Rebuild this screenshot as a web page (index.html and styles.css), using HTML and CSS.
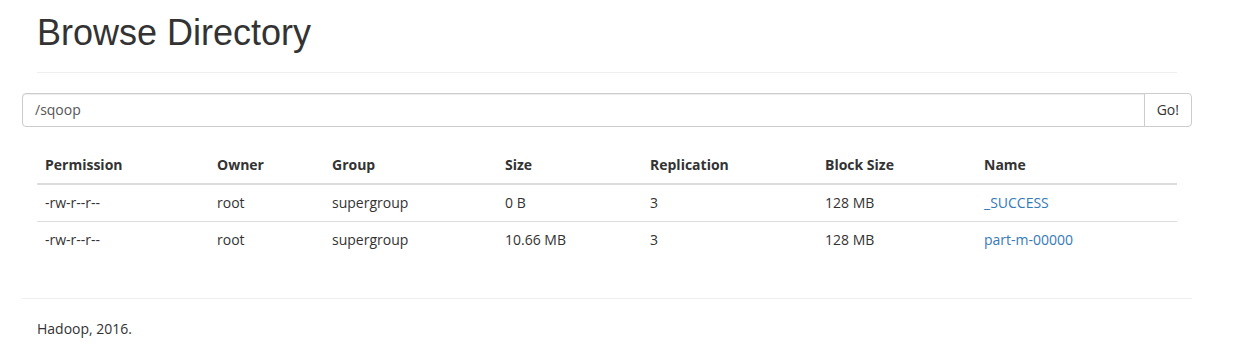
FILE: index.html
```html
<!DOCTYPE html>
<html>
<head>
<meta charset="utf-8">
<title>Browsing HDFS</title>
<link rel="stylesheet" href="styles.css">
</head>
<body>
<div class="container">
  <div class="page-header">
    <h1>Browse Directory</h1>
  </div>
  <div class="row">
    <form class="input-group">
      <input class="form-control" type="text" value="/sqoop">
      <button class="btn" type="button">Go!</button>
    </form>
  </div>
  <table class="table">
    <colgroup>
      <col class="c-perm"><col class="c-owner"><col class="c-group"><col class="c-size"><col class="c-rep"><col class="c-block"><col class="c-name">
    </colgroup>
    <thead>
      <tr><th>Permission</th><th>Owner</th><th>Group</th><th>Size</th><th>Replication</th><th>Block Size</th><th>Name</th></tr>
    </thead>
    <tbody>
      <tr><td>-rw-r--r--</td><td>root</td><td>supergroup</td><td>0 B</td><td>3</td><td>128 MB</td><td><a href="#">_SUCCESS</a></td></tr>
      <tr><td>-rw-r--r--</td><td>root</td><td>supergroup</td><td>10.66 MB</td><td>3</td><td>128 MB</td><td><a href="#">part-m-00000</a></td></tr>
    </tbody>
  </table>
  <div class="row footer">
    <hr>
    <p class="copy">Hadoop, 2016.</p>
  </div>
</div>
</body>
</html>
```

FILE: styles.css
```css
* { box-sizing: border-box; }
html, body { margin: 0; padding: 0; background: #fff; }
body {
  font-family: "Open Sans", "Noto Sans", sans-serif;
  font-size: 14px;
  line-height: 20px;
  color: #333;
}
.container {
  width: 1170px;
  margin-left: 22px;
  padding: 0 15px;
}
.page-header {
  padding-bottom: 9px;
  margin: 0 0 20px;
  border-bottom: 1px solid #eee;
}
.page-header h1 {
  margin: 13px 0 10px;
  font-family: "Liberation Sans", Arial, sans-serif;
  font-size: 36px;
  font-weight: 500;
  line-height: 39.6px;
  color: #333;
}
.row { margin: 0 -15px; }
.input-group { display: flex; margin: 0; }
.form-control {
  flex: 1;
  height: 34px;
  padding: 6px 12px;
  font-family: inherit;
  font-size: 14px;
  line-height: 20px;
  color: #555;
  background: #fff;
  border: 1px solid #ccc;
  border-radius: 4px 0 0 4px;
  box-shadow: inset 0 1px 1px rgba(0,0,0,.075);
  outline: none;
}
.btn {
  height: 34px;
  margin-left: -1px;
  padding: 6px 12px;
  font-family: inherit;
  font-size: 14px;
  line-height: 20px;
  color: #333;
  background: #fff;
  border: 1px solid #ccc;
  border-radius: 0 4px 4px 0;
  cursor: pointer;
}
.table {
  width: 100%;
  table-layout: fixed;
  border-collapse: collapse;
  border-spacing: 0;
  margin: 20px 0 40px;
}
.c-perm { width: 172px; }
.c-owner { width: 115px; }
.c-group { width: 173px; }
.c-size { width: 145px; }
.c-rep { width: 175px; }
.c-block { width: 159px; }
.table th, .table td {
  padding: 8px;
  line-height: 20px;
  text-align: left;
  vertical-align: top;
}
.table th {
  font-weight: 700;
  border-bottom: 2px solid #ddd;
}
.table td { border-top: 1px solid #ddd; }
.table a { color: #337ab7; text-decoration: none; }
.footer hr {
  margin: 20px 0;
  border: 0;
  border-top: 1px solid #eee;
}
.copy {
  margin: 0 0 10px;
  padding: 0 15px;
}
```
